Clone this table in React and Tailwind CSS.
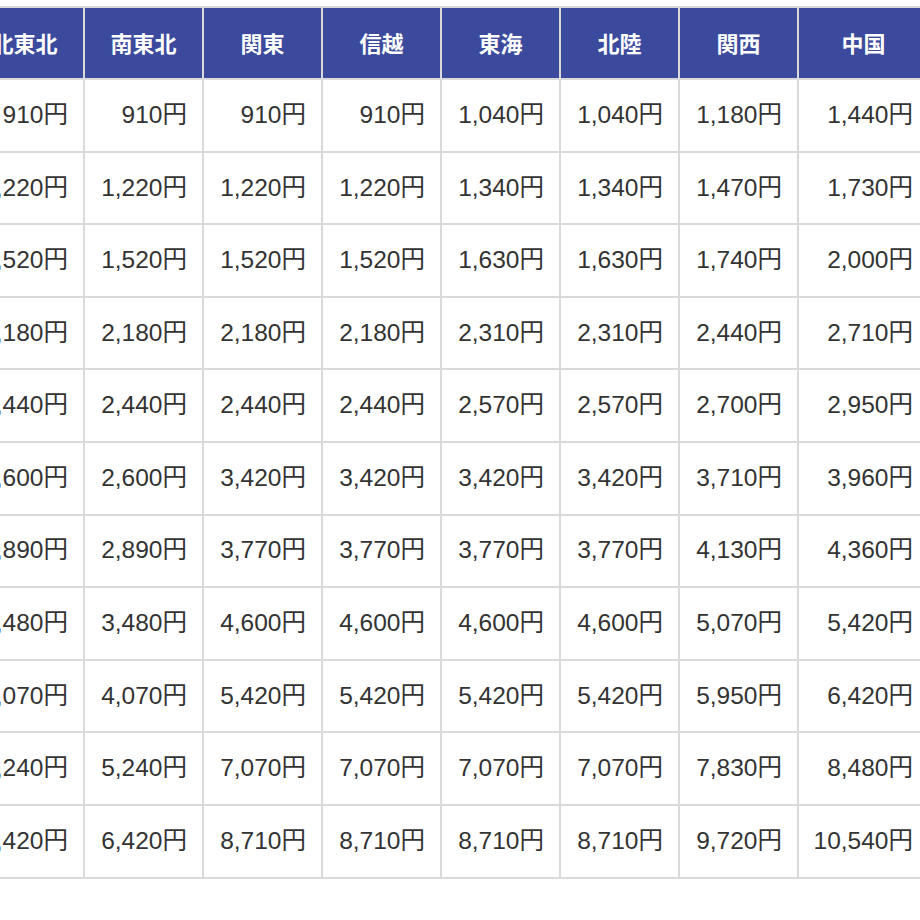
import React from 'react';

const regions = ['北東北', '南東北', '関東', '信越', '東海', '北陸', '関西', '中国', '四国'];

const rows = [
  ['910', '910', '910', '910', '1,040', '1,040', '1,180', '1,440', '1,440'],
  ['1,220', '1,220', '1,220', '1,220', '1,340', '1,340', '1,470', '1,730', '1,730'],
  ['1,520', '1,520', '1,520', '1,520', '1,630', '1,630', '1,740', '2,000', '2,000'],
  ['2,180', '2,180', '2,180', '2,180', '2,310', '2,310', '2,440', '2,710', '2,710'],
  ['2,440', '2,440', '2,440', '2,440', '2,570', '2,570', '2,700', '2,950', '2,950'],
  ['2,600', '2,600', '3,420', '3,420', '3,420', '3,420', '3,710', '3,960', '3,960'],
  ['2,890', '2,890', '3,770', '3,770', '3,770', '3,770', '4,130', '4,360', '4,360'],
  ['3,480', '3,480', '4,600', '4,600', '4,600', '4,600', '5,070', '5,420', '5,420'],
  ['4,070', '4,070', '5,420', '5,420', '5,420', '5,420', '5,950', '6,420', '6,420'],
  ['5,240', '5,240', '7,070', '7,070', '7,070', '7,070', '7,830', '8,480', '8,480'],
  ['6,420', '6,420', '8,710', '8,710', '8,710', '8,710', '9,720', '10,540', '10,540']
];

const colWidths = ['w-[119px]', 'w-[119px]', 'w-[119px]', 'w-[119px]', 'w-[119px]', 'w-[119px]', 'w-[119px]', 'w-[131px]', 'w-[131px]'];

const App = () => {
  return (
    <div className="w-[920px] h-[920px] overflow-hidden bg-white font-['Liberation_Sans','Noto_Sans_CJK_JP',sans-serif]">
      <div className="pt-[6px] ml-[-36px]">
        <table className="table-fixed border-collapse w-[1083px]">
          <colgroup>
            {colWidths.map((w, i) => <col key={i} className={w} />)}
          </colgroup>
          <thead>
            <tr className="h-[72px]">
              {regions.map((r) =>
              <th key={r} className="bg-[#3b4a9d] text-white text-[22px] font-bold border-2 border-[#dadada] text-center align-middle pb-[2px] font-['Noto_Sans_CJK_JP',sans-serif]">
                  {r}
                </th>
              )}
            </tr>
          </thead>
          <tbody>
            {rows.map((row, i) =>
            <tr key={i} className="h-[72.6px]">
                {row.map((v, j) =>
              <td key={j} className="border-2 border-[#dadada] text-right pr-[15px] text-[24.5px] text-[#333] align-middle whitespace-nowrap">
                    {v}円
                  </td>
              )}
              </tr>
            )}
          </tbody>
        </table>
      </div>
    </div>);

};

export default App;
